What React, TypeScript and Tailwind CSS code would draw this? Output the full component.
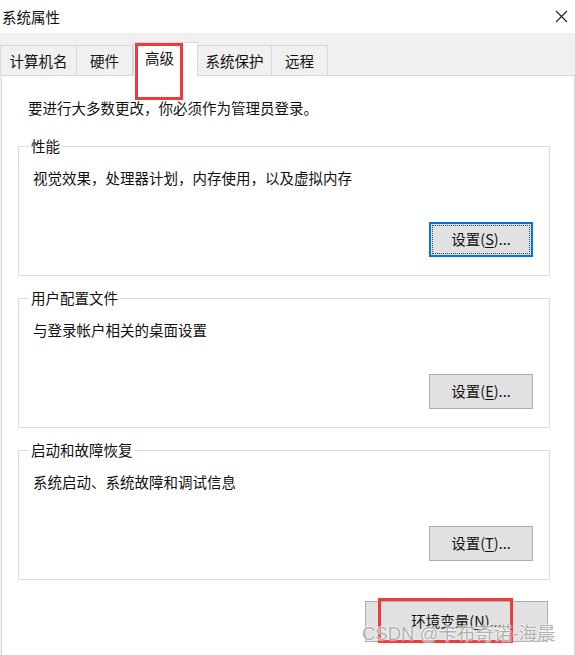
const FONT = { fontFamily: '"Microsoft YaHei", "Noto Sans CJK SC", "Noto Sans", sans-serif' };

interface WinButtonProps {
    label: string;
    hotkey: string;
    focused?: boolean;
    className?: string;
}

const WinButton = ({ label, hotkey, focused, className }: WinButtonProps) => {
    return (
        <div
            className={`relative flex items-center justify-center bg-[#e1e1e1] text-[14.5px] text-[#111] ${
                focused ? "border-2 border-[#0078d7]" : "border border-[#adadad]"
            } ${className ?? ""}`}
        >
            {focused && (
                <div className="absolute inset-[1px] border border-dotted border-[#444]" />
            )}
            <span className="leading-none">
                {label}(<span className="underline underline-offset-2">{hotkey}</span>)...
            </span>
        </div>
    );
};

interface GroupProps {
    title: string;
    desc: string;
    hotkey: string;
    focused?: boolean;
    className?: string;
}

const GroupBox = ({ title, desc, hotkey, focused, className }: GroupProps) => {
    return (
        <div
            className={`relative ml-[16px] flex h-[130px] w-[532px] flex-col border border-[#dcdcdc] pl-[14px] pt-[21px] ${
                className ?? ""
            }`}
        >
            {/* legend sits on the border */}
            <span className="absolute -top-[11px] left-[10px] bg-white px-[2px] text-[14.5px] leading-[20px] text-[#111]">
                {title}
            </span>
            <p className="text-[14.5px] leading-[20px] text-[#111]">{desc}</p>
            <WinButton
                label="设置"
                hotkey={hotkey}
                focused={focused}
                className="mr-[16px] mt-[34px] h-[35px] w-[104px] self-end"
            />
        </div>
    );
};

const tabs = [
    { name: "计算机名", w: "w-[77px]" },
    { name: "硬件", w: "w-[56px]" },
    { name: "高级", w: "w-[65px]", active: true },
    { name: "系统保护", w: "w-[74px]" },
    { name: "远程", w: "w-[56px]" },
];

export default function App() {
    return (
        <div className="relative h-[655px] w-[575px] overflow-hidden bg-[#f0f0f0]" style={FONT}>
            {/* ================== Title bar ================== */}
            <div className="flex h-[33px] items-center justify-between bg-white pl-[2px] pr-[7px]">
                <span className="text-[14.5px] text-[#111]">系统属性</span>
                <svg width="13" height="13" viewBox="0 0 13 13" stroke="#222" strokeWidth="1.1">
                    <path d="M1 1L12 12M12 1L1 12" />
                </svg>
            </div>

            {/* ================== Tabs ================== */}
            <div className="flex h-[42px] items-end">
                {tabs.map((t) =>
                    t.active ? (
                        <div
                            key={t.name}
                            className={`relative z-10 -mb-px flex h-[34px] ${t.w} items-start border border-b-0 border-[#d9d9d9] bg-white pl-[11px] pt-[4px] text-[14.5px] text-[#111]`}
                        >
                            {t.name}
                            <div className="absolute left-[1px] top-0 h-[57px] w-[48px] border-[3px] border-[#ef3b3b]" />
                        </div>
                    ) : (
                        <div
                            key={t.name}
                            className={`flex h-[30px] ${t.w} items-center justify-center border border-b-0 border-l-0 border-[#d9d9d9] bg-[#f0f0f0] text-[14.5px] text-[#111] first:border-l`}
                        >
                            {t.name}
                        </div>
                    )
                )}
            </div>

            {/* ================== Panel ================== */}
            <div className="ml-[1px] flex h-[580px] w-[574px] flex-col border border-b-0 border-[#d9d9d9] bg-white pt-[22px]">
                <p className="pl-[26px] text-[14.5px] leading-[20px] text-[#111]">
                    要进行大多数更改，你必须作为管理员登录。
                </p>

                <GroupBox
                    className="mt-[28px]"
                    title="性能"
                    desc="视觉效果，处理器计划，内存使用，以及虚拟内存"
                    hotkey="S"
                    focused
                />
                <GroupBox
                    className="mt-[22px]"
                    title="用户配置文件"
                    desc="与登录帐户相关的桌面设置"
                    hotkey="E"
                />
                <GroupBox
                    className="mt-[22px]"
                    title="启动和故障恢复"
                    desc="系统启动、系统故障和调试信息"
                    hotkey="T"
                />

                <div className="relative mr-[26px] mt-[21px] self-end">
                    <WinButton label="环境变量" hotkey="N" className="h-[41px] w-[183px]" />
                    <div className="absolute -top-[3px] left-[13px] h-[45px] w-[135px] border-[3px] border-[#ef3b3b]" />
                </div>
            </div>

            {/* ================== Watermark ================== */}
            <span
                className="absolute left-[362px] top-[623px] text-[18.5px] leading-[22px] text-[#b0b0b0]"
                style={{
                    fontFamily: '"Liberation Sans", "Noto Sans CJK SC", sans-serif',
                    textShadow: "0 0 2px #fff, 0 0 2px #fff",
                }}
            >
                CSDN @卡布奇诺-海晨
            </span>
        </div>
    );
}
